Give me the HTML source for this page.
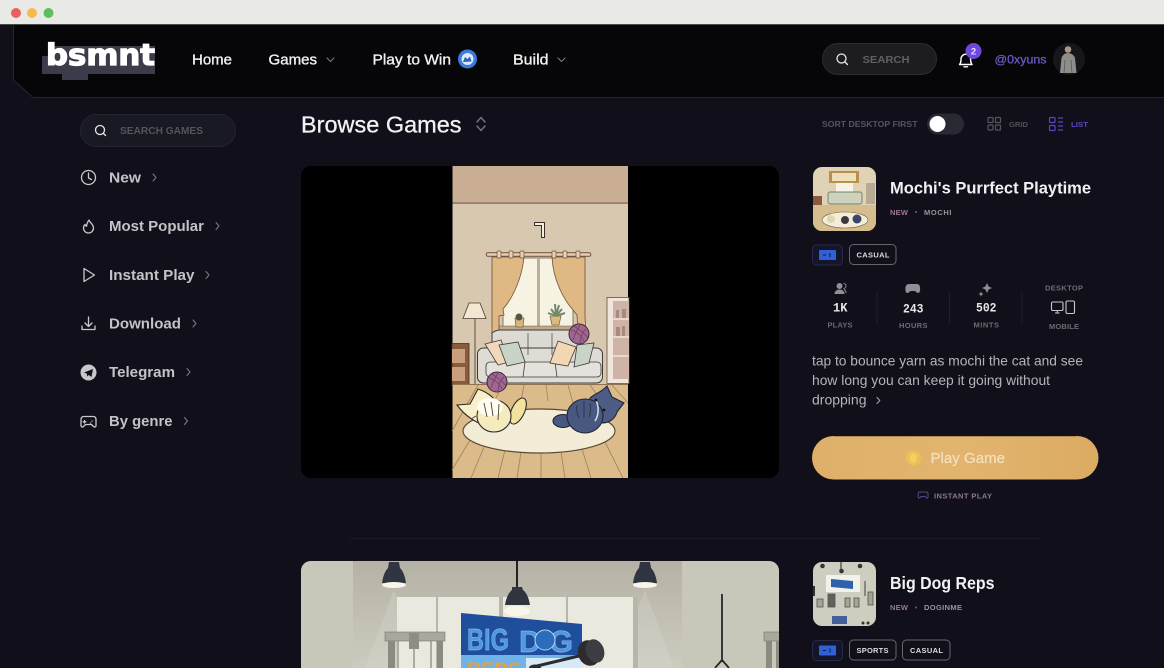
<!DOCTYPE html>
<html lang="en"><head><meta charset="utf-8"><title>Browse Games</title>
<style>
html,body{margin:0;padding:0;background:#11101a;width:1164px;height:668px;overflow:hidden}
svg{display:block;position:absolute;left:0;top:0}
text{font-family:"Liberation Sans",sans-serif}
.nav{font-size:15px;fill:#f0f0f0;stroke:#f0f0f0;stroke-width:.35px}
.menu{font-size:15px;font-weight:bold;fill:#c2c2c7}
.lab{font-size:7.500px;font-weight:bold;fill:#6b6b72}
.val{font-family:"Liberation Mono",monospace;font-size:12.500px;font-weight:bold;fill:#e6e6e6}
.title{font-size:17px;font-weight:bold;fill:#f1f1f3}
.tag{font-size:7.500px;font-weight:bold;fill:#dcdcdf}
.desc{font-size:14px;fill:#b4b4b8}
.ic{fill:none;stroke:#c8c8cc;stroke-width:1.300;stroke-linecap:round;stroke-linejoin:round}
.chev{fill:none;stroke:#77777d;stroke-width:1.100;stroke-linecap:round;stroke-linejoin:round}
</style></head><body>
<svg width="1164" height="668" viewBox="0 0 1164 668" xmlns="http://www.w3.org/2000/svg">
<defs>
<linearGradient id="btn" x1="0" x2="1" y1="0" y2="0"><stop offset="0" stop-color="#deb06a"/><stop offset=".5" stop-color="#e2b56f"/><stop offset="1" stop-color="#dcab62"/></linearGradient>
<linearGradient id="wall2" x1="0" x2="0" y1="0" y2="1"><stop offset="0" stop-color="#b5b2a5"/><stop offset="1" stop-color="#d0cec2"/></linearGradient>
<clipPath id="c1"><rect x="301" y="166" width="478" height="312" rx="10"/></clipPath>
<clipPath id="c2"><rect x="301" y="561" width="478" height="120" rx="10"/></clipPath>
<clipPath id="t1"><rect x="813" y="167" width="63" height="64" rx="9"/></clipPath>
<clipPath id="t2"><rect x="813" y="562" width="63" height="64" rx="9"/></clipPath>
</defs>

<!-- window chrome -->
<rect width="1164" height="25" fill="#e9e9e6"/>
<rect y="24" width="1164" height="1" fill="#4a4a4a"/>
<circle cx="16" cy="13" r="5" fill="#ec5f61"/><circle cx="32" cy="13" r="5" fill="#f5bb4a"/><circle cx="48.500" cy="13" r="5" fill="#5cc05a"/>

<!-- header -->
<path d="M13 25V80L33 97H1164V25Z" fill="#060608"/>
<path d="M13.500 25V80L33 97.500H1164" fill="none" stroke="#26262b" stroke-width="1"/>

<!-- logo -->
<path d="M42 56H48V46H155V74H88V80H62V74H42Z" fill="#3b3b49"/>
<text x="46" y="65" font-size="29" textLength="109" lengthAdjust="spacingAndGlyphs" style="font-family:'DejaVu Sans',sans-serif;font-weight:bold" fill="#fff" stroke="#fff" stroke-width="1.200">bsmnt</text>

<text class="nav" x="192" y="64.500" textLength="40" lengthAdjust="spacingAndGlyphs">Home</text>
<text class="nav" x="268.500" y="64.500" textLength="48.500" lengthAdjust="spacingAndGlyphs">Games</text>
<path class="chev" d="M327 58l3.500 3.500 3.500-3.500"/>
<text class="nav" x="372.500" y="64.500" textLength="78.500" lengthAdjust="spacingAndGlyphs">Play to Win</text>
<circle cx="467.500" cy="59" r="9.500" fill="#3a7be0"/><circle cx="467.500" cy="59" r="6" fill="#dfe9f7"/><path d="M463 62l2-5 2.500 2 2.500-2.500 1.500 5z" fill="#2a5fc0"/>
<text class="nav" x="513" y="64.500" textLength="35.500" lengthAdjust="spacingAndGlyphs">Build</text>
<path class="chev" d="M558 58l3.500 3.500 3.500-3.500"/>

<rect x="822.500" y="43.500" width="114" height="31" rx="15.500" fill="#1d1d20" stroke="#2d2d31"/>
<circle cx="841.500" cy="58.500" r="4.500" class="ic" style="stroke:#e8e8e8"/><path d="M845 62l2.500 2.500" class="ic" style="stroke:#e8e8e8"/>
<text x="862.500" y="63" font-size="10.500" font-weight="bold" fill="#5f5f64" textLength="47" lengthAdjust="spacingAndGlyphs">SEARCH</text>

<path d="M959.500 64.500c1.500-1.500 1.500-3 1.500-5.500a4.800 4.800 0 0 1 9.600 0c0 2.500 0 4 1.500 5.500z" fill="none" stroke="#fff" stroke-width="1.400" stroke-linejoin="round"/><path d="M964 66.800h3.500" stroke="#fff" stroke-width="1.400" stroke-linecap="round"/>
<circle cx="973.500" cy="51" r="8" fill="#6e48dc"/>
<text x="973.500" y="54.500" font-size="9.500" font-weight="bold" fill="#e4dcfa" text-anchor="middle">2</text>
<text x="994.500" y="63.500" font-size="12" fill="#6a58c0" stroke="#6a58c0" stroke-width=".3" textLength="52" lengthAdjust="spacingAndGlyphs">@0xyuns</text>
<circle cx="1069" cy="59" r="16" fill="#17161b"/>
<circle cx="1068" cy="49.500" r="3.300" fill="#a89a8a"/>
<path d="M1060 73l1.500-15c1-3 3.500-5 6.500-5s6 2 7 5l1.500 15z" fill="#8e8e8b"/>
<path d="M1064 73l1-13M1072 73l-1-13" stroke="#5a5a58" stroke-width=".8"/>

<!-- toolbar -->
<text x="301" y="132.300" font-size="23.500" fill="#f2f2f4" stroke="#f2f2f4" stroke-width=".3" textLength="160.500" lengthAdjust="spacingAndGlyphs">Browse Games</text>
<path d="M477 122l4-4.500 4 4.500M477 126l4 4.500 4-4.500" fill="none" stroke="#77777f" stroke-width="1.400" stroke-linecap="round" stroke-linejoin="round"/>

<text class="lab" x="822" y="127" textLength="95.500" lengthAdjust="spacingAndGlyphs" style="fill:#55555e;font-size:8px">SORT DESKTOP FIRST</text>
<rect x="927" y="113.500" width="37" height="21" rx="10.500" fill="#292934"/>
<circle cx="937.500" cy="124" r="8" fill="#fff"/>
<g fill="none" stroke="#55555d" stroke-width="1.200"><rect x="988" y="117.500" width="5" height="5" rx=".8"/><rect x="995.500" y="117.500" width="5" height="5" rx=".8"/><rect x="988" y="125" width="5" height="5" rx=".8"/><rect x="995.500" y="125" width="5" height="5" rx=".8"/></g>
<text class="lab" x="1009" y="127" textLength="19" lengthAdjust="spacingAndGlyphs" style="fill:#4f4f57">GRID</text>
<g fill="none" stroke="#5645c4" stroke-width="1.200"><rect x="1049.500" y="117.500" width="5.500" height="5" rx=".8"/><rect x="1049.500" y="125.500" width="5.500" height="5" rx=".8"/><path d="M1058 118h5M1058 122h5M1058 126h5M1058 130h5"/></g>
<text class="lab" x="1071" y="127" textLength="17" lengthAdjust="spacingAndGlyphs" style="fill:#5a49c8">LIST</text>

<!-- sidebar -->
<rect x="80.500" y="114.500" width="155" height="32" rx="16" fill="#191923" stroke="#25252e"/>
<circle cx="100" cy="130" r="4.500" class="ic" style="stroke:#e6e6e6"/><path d="M103.500 133.500l2 2" class="ic" style="stroke:#e6e6e6"/>
<text x="120" y="134" font-size="10" font-weight="bold" fill="#54545b" textLength="83" lengthAdjust="spacingAndGlyphs">SEARCH GAMES</text>

<circle cx="88.500" cy="177.500" r="7" class="ic"/><path class="ic" d="M88.500 173v5l3 1.500"/>
<text class="menu" x="109" y="182.500" textLength="32" lengthAdjust="spacingAndGlyphs">New</text><path class="chev" d="M153 174l3 3.500-3 3.500"/>

<path class="ic" d="M89 220c.5 2.500 4.500 4 4.500 8a5 5 0 0 1-10 0c0-1.500.5-2.500 1.500-3.500.3 1 .8 1.500 1.500 1.800C86.800 224 87.500 222 89 220z"/>
<text class="menu" x="109" y="231" textLength="95" lengthAdjust="spacingAndGlyphs">Most Popular</text><path class="chev" d="M216 222.500l3 3.500-3 3.500"/>

<path class="ic" d="M84 268.500v13l10.500-6.500z"/>
<text class="menu" x="109" y="280" textLength="85.500" lengthAdjust="spacingAndGlyphs">Instant Play</text><path class="chev" d="M206 271.500l3 3.500-3 3.500"/>

<path class="ic" d="M88.500 317v9M85 323l3.500 3.500L92 323M82 326v3.500h13V326"/>
<text class="menu" x="109" y="328.500" textLength="72" lengthAdjust="spacingAndGlyphs">Download</text><path class="chev" d="M193 320l3 3.500-3 3.500"/>

<circle cx="88.500" cy="372.500" r="8" fill="#c8c8cc"/><path d="M84 372.500l9-3.500-1.500 8-2.800-2-1.500 1.500-.3-2.700z" fill="#11101a"/>
<text class="menu" x="109" y="377" textLength="66" lengthAdjust="spacingAndGlyphs">Telegram</text><path class="chev" d="M187 368.500l3 3.500-3 3.500"/>

<path class="ic" d="M84 416.500h9c2 0 3 1 3 3v6c0 1.500-1.500 2-2.500 1l-2-2h-6l-2 2c-1 1-2.500.5-2.500-1v-6c0-2 1-3 3-3z"/><path class="ic" d="M84.500 420.500v2.500M83.200 421.800h2.600M92 421h.1M90.500 423h.1"/>
<text class="menu" x="109" y="426" textLength="63.500" lengthAdjust="spacingAndGlyphs">By genre</text><path class="chev" d="M184.500 417.500l3 3.500-3 3.500"/>

<!-- game 1 image -->
<g clip-path="url(#c1)">
<rect x="301" y="166" width="478" height="312" fill="#000"/>
<rect x="452.500" y="166" width="175.500" height="312" fill="#d8c8af"/>
<rect x="452.500" y="166" width="175.500" height="37" fill="#c9ae94"/>
<rect x="452.500" y="202.500" width="175.500" height="1.200" fill="#7d6650"/>
<path d="M534.500 222.500h10v15h-3v-12h-7z" fill="#f5f0e4" stroke="#3a2e28" stroke-width="1"/>
<!-- window -->
<rect x="503" y="258" width="70" height="70" fill="#f7f3e3" stroke="#8a7560"/>
<rect x="537" y="258" width="3" height="70" fill="#bfae97"/>
<rect x="499" y="326" width="78" height="4" fill="#c2a98d" stroke="#6a5646" stroke-width=".5"/>
<!-- curtains -->
<path d="M492 257h32c-2 22-12 42-21 52l1 6-5 1v17h-7z" fill="#dfb884" stroke="#6a5040" stroke-width=".8"/>
<path d="M552 257h33v60l1 16h-8l-1-18-4-5c-9-10-20-30-21-53z" fill="#dfb884" stroke="#6a5040" stroke-width=".8"/>
<path d="M488 254.500h101" stroke="#6a5040" stroke-width="4.500" stroke-linecap="round"/><path d="M488 254.500h101" stroke="#ecd0b0" stroke-width="2.500" stroke-linecap="round"/>
<g fill="#ecd0b0" stroke="#6a5040" stroke-width=".7"><rect x="497" y="251" width="4" height="7" rx="1"/><rect x="509" y="251" width="4" height="7" rx="1"/><rect x="520" y="251" width="4" height="7" rx="1"/><rect x="552" y="251" width="4" height="7" rx="1"/><rect x="563" y="251" width="4" height="7" rx="1"/><rect x="576" y="251" width="4" height="7" rx="1"/></g>
<!-- plants -->
<path d="M516 327l-1-9h9l-1 9z" fill="#d7b67c" stroke="#5a4a3a" stroke-width=".6"/><circle cx="519" cy="317" r="3.500" fill="#4f5a3e"/>
<path d="M552 325l-2-9h11l-2 9z" fill="#dcb97c" stroke="#5a4a3a" stroke-width=".6"/>
<path d="M556 316l-5-7M556 316l-1-12M556 316l3-11M556 316l6-7M556 316l-8-3M556 316l9-3" stroke="#6f8a6a" stroke-width="2"/>
<!-- lamp -->
<path d="M475 318v68" stroke="#9a8a78" stroke-width="2"/>
<path d="M469 303h11l6 15.500h-23z" fill="#f3e6d3" stroke="#4a3c32" stroke-width=".8"/>
<!-- shelf -->
<rect x="607" y="297.500" width="22" height="86" fill="#f0e6dc" stroke="#6a5040" stroke-width=".8"/>
<rect x="613" y="301" width="16" height="78" fill="#cfb3a6"/>
<g stroke="#efe4da" stroke-width="1.500"><path d="M613 319h16M613 337h16M613 356h16"/></g>
<g fill="#a88a82"><rect x="616" y="310" width="3" height="8"/><rect x="622" y="309" width="4" height="9"/><rect x="616" y="327" width="4" height="9"/><rect x="622" y="326" width="3" height="10"/></g>
<!-- drawer -->
<rect x="452" y="343.500" width="17" height="42" fill="#8a5a3c" stroke="#4a3022" stroke-width=".8"/>
<rect x="452" y="349" width="13" height="14" fill="#c9a07c"/><rect x="452" y="367" width="13" height="14" fill="#c9a07c"/>
<!-- floor -->
<rect x="452.500" y="385" width="175.500" height="93" fill="#dcbb8a"/>
<g stroke="#a5875e" stroke-width=".9"><path d="M478 385l-26 46M502 385l-11 24M524 385l-3 16M546 385l2 16M568 385l5 18M590 385l18 26M612 385l16 18"/><path d="M484 447l-13 31M505 450l-7 28M521 452l-4 26M541 452v26M561 452l4 26M582 449l9 29M605 442l18 36M470 440l-18 30"/></g>
<rect x="452.500" y="384" width="175.500" height="1" fill="#8f7350"/>
<!-- rug -->
<ellipse cx="539" cy="431" rx="76" ry="22" fill="#f3ecd6" stroke="#5a4a38" stroke-width="1.200"/>
<!-- sofa -->
<path d="M492 333q4-3 8-3h75q4 0 8 3v17h-91z" fill="#dcdad3" stroke="#3a3a38" stroke-width="1"/>
<rect x="477.500" y="348" width="125" height="35" rx="6" fill="#dedcd5" stroke="#3a3a38" stroke-width="1"/>
<path d="M528 333v22M552 333v22" stroke="#3a3a38" stroke-width=".7"/>
<rect x="486" y="362" width="115" height="15" rx="4" fill="#e4e2dc" stroke="#3a3a38" stroke-width=".8"/>
<path d="M525 362l-2 15M555 362l2 15" stroke="#3a3a38" stroke-width=".8"/>
<path d="M485 344l16-4 8 22-11 3z" fill="#efd8bc" stroke="#4a3c32" stroke-width=".8"/>
<path d="M499 345l19-3 7 20-18 4z" fill="#c8d5c6" stroke="#3a3a38" stroke-width=".8"/>
<path d="M558 341l18 6-8 19-18-3z" fill="#f3d7b2" stroke="#4a3c32" stroke-width=".8"/>
<path d="M577 345l17-2-5 20-15 4z" fill="#c8d5c6" stroke="#3a3a38" stroke-width=".8"/>
<!-- yarn -->
<circle cx="579" cy="334" r="10" fill="#a0668f" stroke="#3b2a3a"/><path d="M571 330c5 1 10 5 13 11M574 326c4 3 10 6 14 12M580 325c-3 5-6 11-7 15M586 329c-4 3-6 9-6 14" fill="none" stroke="#6e3f62" stroke-width=".8"/>
<circle cx="497" cy="382" r="10" fill="#a0668f" stroke="#3b2a3a"/><path d="M489 378c5 1 10 5 13 11M492 374c4 3 10 6 14 12M498 373c-3 5-6 11-7 15M504 377c-4 3-6 9-6 14" fill="none" stroke="#6e3f62" stroke-width=".8"/>
<!-- cream cat -->
<path d="M457 405L470 404L478 389C490 393 497 400 500 410L490 426C478 425 465 416 457 405Z" fill="#f8efcb" stroke="#2e2a26" stroke-width="1.100"/>
<ellipse cx="518" cy="411" rx="6.500" ry="14" transform="rotate(25 518 411)" fill="#f3e39f" stroke="#2e2a26" stroke-width="1.100"/>
<ellipse cx="494" cy="416" rx="17" ry="16" fill="#f6ebbd" stroke="#2e2a26" stroke-width="1.100"/>
<ellipse cx="490" cy="407" rx="13" ry="9" fill="#fffdf2"/>
<path d="M484 403l3 14M491 402l2 14M499 404l-1 16M476 416l-5 3" stroke="#4a4036" stroke-width=".9"/>
<!-- blue cat -->
<ellipse cx="563" cy="421" rx="10" ry="6.500" fill="#48587f" stroke="#1f2438" stroke-width="1.100"/>
<path d="M590 398C596 393 602 392 607 386L612 397L624 403L617 412C615 420 606 425 598 422C590 415 588 405 590 398Z" fill="#4d5c85" stroke="#1f2438" stroke-width="1.100"/>
<ellipse cx="585" cy="416" rx="18" ry="17" fill="#48587f" stroke="#1f2438" stroke-width="1.100"/>
<path d="M596 401c3 5 3 14-1 20" stroke="#d2d8e6" stroke-width="1.600" fill="none"/>
<circle cx="596" cy="400" r="1.400" fill="#111"/><circle cx="604" cy="410" r="1.400" fill="#111"/>
<path d="M584 401v17M577 405c-1 5 0 9 2 13M590 403c1 5 1 9-1 14" stroke="#2b3352" stroke-width=".9" fill="none"/>
</g>

<!-- game 1 info -->
<g clip-path="url(#t1)">
<rect x="813" y="167" width="63" height="64" fill="#e0d3b5"/>
<rect x="813" y="205" width="63" height="26" fill="#d6bd8e"/>
<rect x="829" y="171" width="30" height="12" fill="#b88f4c"/><rect x="832" y="173" width="24" height="8" fill="#efe0bb"/>
<rect x="836" y="183" width="17" height="9" fill="#f7f3e5"/>
<rect x="828" y="192" width="34" height="12" rx="2" fill="#ccd2bc" stroke="#57604c" stroke-width=".7"/>
<rect x="813" y="196" width="9" height="9" fill="#8a5a3c"/><rect x="866" y="183" width="9" height="21" fill="#b8a994"/>
<ellipse cx="845" cy="220" rx="23" ry="8" fill="#f4edd8" stroke="#6a5a44" stroke-width=".6"/>
<circle cx="831" cy="219" r="4" fill="#dfd6b6"/><circle cx="845" cy="220" r="4" fill="#3d3a3e"/><circle cx="857" cy="219" r="4.500" fill="#3b4668"/>
</g>
<text class="title" x="890" y="193.500" textLength="201" lengthAdjust="spacingAndGlyphs">Mochi's Purrfect Playtime</text>
<text class="lab" x="890" y="215" textLength="18" style="fill:#9b7795">NEW</text>
<circle cx="916" cy="212" r="1" fill="#666"/>
<text class="lab" x="924" y="215" textLength="27.500" style="fill:#95959c">MOCHI</text>

<rect x="812.500" y="245" width="30" height="20" rx="4" fill="#14152a" stroke="#262a48"/>
<rect x="819" y="250" width="17" height="10" rx="1" fill="#2f60d6"/><path d="M823 255h3M830 253v4" stroke="#14152a"/>
<rect x="849.500" y="244.500" width="46.500" height="20" rx="4" fill="none" stroke="#66666e"/>
<text class="tag" x="856.500" y="257.500" textLength="33">CASUAL</text>

<g fill="#8f8f96"><circle cx="839.500" cy="286" r="3"/><path d="M834.500 294c0-3 2.500-4.500 5-4.500s5 1.500 5 4.500z"/><path d="M843.500 283.500a2.500 2.500 0 0 1 0 5M846 293c0-2-.6-3-2-3.500" fill="none" stroke="#8f8f96"/></g>
<path d="M909 284h8c2 0 3 1.500 3 4 .5 3-.5 5-2 5-1.500 0-2-2-3.500-2h-3.500c-1.500 0-2 2-3.500 2-1.500 0-2.500-2-2-5 0-2.500 1.500-4 3.500-4z" fill="#8f8f96"/>
<path d="M987 283l1.600 3.500 3.400 1.500-3.400 1.500-1.600 3.500-1.600-3.500-3.400-1.500 3.400-1.500zM981 291.500l.8 1.700 1.700.8-1.700.8-.8 1.700-.8-1.700-1.700-.8 1.700-.8z" fill="#8f8f96"/>
<text class="val" x="833" y="311.500" textLength="14.500" lengthAdjust="spacingAndGlyphs">1K</text>
<text class="val" x="903" y="312.500" textLength="20.500" lengthAdjust="spacingAndGlyphs">243</text>
<text class="val" x="976" y="311.500" textLength="20.500" lengthAdjust="spacingAndGlyphs">502</text>
<text class="lab" x="827.500" y="327.500" textLength="25">PLAYS</text>
<text class="lab" x="899" y="328" textLength="28.500">HOURS</text>
<text class="lab" x="973.500" y="327.500" textLength="25.500">MINTS</text>
<text class="lab" x="1045" y="290.500" textLength="38">DESKTOP</text>
<text class="lab" x="1049" y="329" textLength="30">MOBILE</text>
<g stroke="#1e1e28" stroke-width="1"><path d="M877 292v32M949.500 292v32M1022 292v32"/></g>
<g fill="none" stroke="#c8c8cc" stroke-width="1.100"><rect x="1051.500" y="302" width="11.500" height="8.500" rx="1.200"/><path d="M1055 313h4.500M1057.300 310.500V313"/><rect x="1066" y="301" width="8.500" height="12.500" rx="1.500"/></g>

<text class="desc" x="812" y="365.500" textLength="271" lengthAdjust="spacingAndGlyphs">tap to bounce yarn as mochi the cat and see</text>
<text class="desc" x="812" y="385" textLength="238" lengthAdjust="spacingAndGlyphs">how long you can keep it going without</text>
<text class="desc" x="812" y="404.500" textLength="54.500" lengthAdjust="spacingAndGlyphs">dropping</text>
<path class="chev" d="M877 397.500l2.800 3-2.800 3" style="stroke:#a0a0a6"/>

<rect x="812" y="436" width="286.500" height="43.500" rx="21.700" fill="url(#btn)"/>
<path d="M834 436.500h242" stroke="#b08a50" stroke-width="1"/>
<circle cx="913.500" cy="458" r="7.500" fill="#ebc155"/><ellipse cx="913.500" cy="458" rx="3.500" ry="5" fill="#f4cf62"/>
<text x="930.500" y="463" font-size="15" fill="#f3e2bd" stroke="#f3e2bd" stroke-width=".2" textLength="74.500" lengthAdjust="spacingAndGlyphs">Play Game</text>
<path d="M920 492h6c1.300 0 2 .8 2 2v3c0 1-1 1.400-1.700.7l-1.300-1.200h-3.800l-1.300 1.200c-.7.700-1.700.3-1.700-.7v-3c0-1.200.7-2 1.800-2z" fill="none" stroke="#4e4890" stroke-width="1"/>
<text class="lab" x="934" y="498.300" textLength="58" style="fill:#8d7793">INSTANT PLAY</text>

<rect x="350" y="538" width="690" height="1" fill="#1c1b26"/>

<!-- game 2 image -->
<g clip-path="url(#c2)">
<rect x="301" y="561" width="478" height="120" fill="url(#wall2)"/>
<rect x="301" y="561" width="52" height="107" fill="#c8c7ba"/>
<rect x="682" y="561" width="97" height="107" fill="#c8c7ba"/>
<path d="M394 590l-29 78h58z" fill="#dcdad0" opacity=".3"/>
<path d="M645 590l-29 78h58z" fill="#dcdad0" opacity=".3"/>
<rect x="397" y="597" width="236" height="80" fill="#eae9e0"/>
<g fill="#b8b6a9"><rect x="436" y="597" width="2" height="80"/><rect x="499" y="597" width="4" height="80"/><rect x="566" y="597" width="2" height="80"/><rect x="633" y="597" width="5" height="80"/></g>
<path d="M517 561v26" stroke="#222" stroke-width="2"/>
<g fill="#31353f"><path d="M389 562h10l1 6c3 3 5 8 6 15h-24c1-7 3-12 6-15z"/><path d="M512 587h10l1 3c4 3 6 9 7 15h-25c1-6 3-12 7-15z"/><path d="M640 562h10l1 6c3 3 5 8 6 15h-24c1-7 3-12 6-15z"/></g>
<g fill="#f8f6ea"><ellipse cx="394" cy="585" rx="12" ry="3"/><ellipse cx="517" cy="611" rx="13" ry="5"/><ellipse cx="645" cy="585" rx="12" ry="3"/></g>
<!-- racks -->
<rect x="385" y="632" width="60" height="9" fill="#a9a89c" stroke="#77766c" stroke-width=".6"/>
<rect x="409" y="633" width="10" height="16" fill="#8f8e84"/>
<g fill="#8c8b81"><rect x="388" y="641" width="7" height="30"/><rect x="437" y="641" width="6" height="30"/></g>
<path d="M414 649v20M398 641v30M431 641v30" stroke="#6f6e66" stroke-width="1"/>
<rect x="764" y="632" width="20" height="9" fill="#a9a89c" stroke="#77766c" stroke-width=".6"/>
<g fill="#8c8b81"><rect x="766" y="641" width="6" height="30"/><rect x="776" y="641" width="6" height="30"/></g>
<path d="M722 594v68M722 660l-7 8M722 660l7 8" stroke="#26262a" stroke-width="1.800" fill="none"/>
<!-- poster -->
<path d="M461 613l121 11v50l-121-6z" fill="#1f4f9c"/>
<g font-weight="bold" font-size="31" fill="#4f98e2" stroke="#9fcff5" stroke-width=".4">
<text x="467" y="650" textLength="42" lengthAdjust="spacingAndGlyphs">BIG</text>
<text x="519" y="652" textLength="54" lengthAdjust="spacingAndGlyphs">D G</text></g>
<circle cx="545" cy="640" r="10" fill="#2c6cbc" stroke="#b6d6f0"/>
<rect x="461" y="655" width="121" height="15" fill="#6fb3e8"/>
<text x="467" y="676" font-size="19" font-weight="bold" fill="#e8a040" textLength="54" lengthAdjust="spacingAndGlyphs">REPS</text>
<rect x="526" y="658" width="56" height="12" fill="#d7e8f6"/>
<!-- barbell -->
<path d="M533 667l50-12" stroke="#2c2c30" stroke-width="3"/>
<ellipse cx="535" cy="668" rx="6" ry="3.500" fill="#2b2b30"/>
<ellipse cx="589" cy="653" rx="11" ry="13" transform="rotate(-20 589 653)" fill="#2b2b30"/>
<ellipse cx="595" cy="651" rx="9" ry="12" transform="rotate(-20 595 651)" fill="#3c3c41"/>
</g>

<!-- game 2 info -->
<g clip-path="url(#t2)">
<rect x="813" y="562" width="63" height="64" fill="#cfcdbf"/>
<rect x="826" y="575" width="34" height="17" fill="#f3f2ea"/>
<path d="M831 579l22 2v8l-22-2z" fill="#2f62ac"/>
<path d="M841 562v8" stroke="#222"/>
<circle cx="822.500" cy="566" r="2.300" fill="#32353c"/><circle cx="841.500" cy="571" r="2.300" fill="#32353c"/><circle cx="860" cy="566" r="2.300" fill="#32353c"/>
<g fill="#a5a498" stroke="#55544c" stroke-width=".8"><rect x="817" y="599" width="6" height="8"/><rect x="828" y="594" width="7" height="13" fill="#62625c"/><rect x="845" y="598" width="5" height="9"/><rect x="854" y="598" width="5" height="9"/><rect x="868" y="592" width="5" height="13"/></g>
<rect x="813" y="586" width="2" height="10" fill="#333"/>
<path d="M865 581v15" stroke="#444"/>
<rect x="832" y="616" width="15" height="8" fill="#425f9a"/><circle cx="863" cy="623" r="1.500" fill="#333"/><circle cx="868" cy="623" r="1.500" fill="#333"/>
</g>
<text class="title" x="890" y="589" textLength="104.500" lengthAdjust="spacingAndGlyphs" style="font-size:17.500px">Big Dog Reps</text>
<text class="lab" x="890" y="610" textLength="18" style="fill:#9b7795">NEW</text>
<circle cx="916" cy="607.500" r="1" fill="#666"/>
<text class="lab" x="924" y="610" textLength="38" style="fill:#95959c">DOGINME</text>
<rect x="812.500" y="640.500" width="30" height="20" rx="4" fill="#14152a" stroke="#262a48"/>
<rect x="819" y="645.500" width="17" height="10" rx="1" fill="#2f60d6"/><path d="M823 650.500h3M830 648.500v4" stroke="#14152a"/>
<rect x="849.500" y="640" width="46.500" height="20" rx="4" fill="none" stroke="#66666e"/>
<text class="tag" x="856.500" y="653" textLength="32">SPORTS</text>
<rect x="902.500" y="640" width="47.500" height="20" rx="4" fill="none" stroke="#66666e"/>
<text class="tag" x="910" y="653" textLength="33">CASUAL</text>
</svg>
</body></html>
